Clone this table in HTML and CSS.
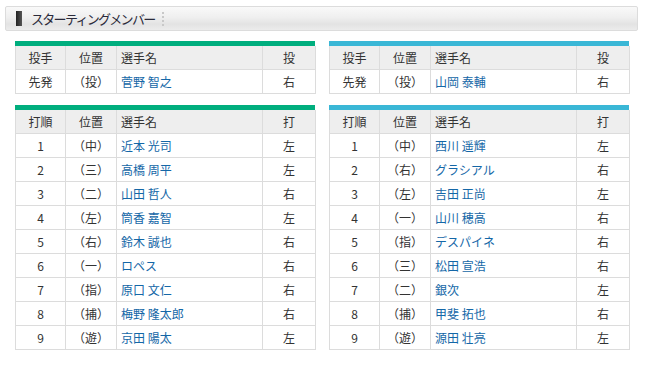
FILE: index.html
```html
<!DOCTYPE html>
<html lang="ja">
<head>
<meta charset="utf-8">
<link rel="stylesheet" href="styles.css">
</head>
<body>
<div class="page">
  <div class="heading">
    <span class="mark"></span>
    <h2 class="title">スターティングメンバー</h2>
    <span class="sep"></span>
  </div>
  <div class="teams">
    <div class="team home">
      <div class="block">
      <table class="lineup">
        <colgroup><col class="c1"><col class="c2"><col class="c3"><col class="c4"></colgroup>
        <thead><tr><th>投手</th><th>位置</th><th class="name">選手名</th><th>投</th></tr></thead>
        <tbody>
          <tr><td>先発</td><td>（投）</td><td class="name"><a>菅野 智之</a></td><td>右</td></tr>
        </tbody>
      </table>
      </div>
      <div class="block">
      <table class="lineup">
        <colgroup><col class="c1"><col class="c2"><col class="c3"><col class="c4"></colgroup>
        <thead><tr><th>打順</th><th>位置</th><th class="name">選手名</th><th>打</th></tr></thead>
        <tbody>
          <tr><td>1</td><td>（中）</td><td class="name"><a>近本 光司</a></td><td>左</td></tr>
          <tr><td>2</td><td>（三）</td><td class="name"><a>高橋 周平</a></td><td>左</td></tr>
          <tr><td>3</td><td>（二）</td><td class="name"><a>山田 哲人</a></td><td>右</td></tr>
          <tr><td>4</td><td>（左）</td><td class="name"><a>筒香 嘉智</a></td><td>左</td></tr>
          <tr><td>5</td><td>（右）</td><td class="name"><a>鈴木 誠也</a></td><td>右</td></tr>
          <tr><td>6</td><td>（一）</td><td class="name"><a>ロペス</a></td><td>右</td></tr>
          <tr><td>7</td><td>（指）</td><td class="name"><a>原口 文仁</a></td><td>右</td></tr>
          <tr><td>8</td><td>（捕）</td><td class="name"><a>梅野 隆太郎</a></td><td>右</td></tr>
          <tr><td>9</td><td>（遊）</td><td class="name"><a>京田 陽太</a></td><td>左</td></tr>
        </tbody>
      </table>
      </div>
    </div>
    <div class="team away">
      <div class="block">
      <table class="lineup">
        <colgroup><col class="c1"><col class="c2"><col class="c3"><col class="c4"></colgroup>
        <thead><tr><th>投手</th><th>位置</th><th class="name">選手名</th><th>投</th></tr></thead>
        <tbody>
          <tr><td>先発</td><td>（投）</td><td class="name"><a>山岡 泰輔</a></td><td>右</td></tr>
        </tbody>
      </table>
      </div>
      <div class="block">
      <table class="lineup">
        <colgroup><col class="c1"><col class="c2"><col class="c3"><col class="c4"></colgroup>
        <thead><tr><th>打順</th><th>位置</th><th class="name">選手名</th><th>打</th></tr></thead>
        <tbody>
          <tr><td>1</td><td>（中）</td><td class="name"><a>西川 遥輝</a></td><td>左</td></tr>
          <tr><td>2</td><td>（右）</td><td class="name"><a>グラシアル</a></td><td>右</td></tr>
          <tr><td>3</td><td>（左）</td><td class="name"><a>吉田 正尚</a></td><td>左</td></tr>
          <tr><td>4</td><td>（一）</td><td class="name"><a>山川 穂高</a></td><td>右</td></tr>
          <tr><td>5</td><td>（指）</td><td class="name"><a>デスパイネ</a></td><td>右</td></tr>
          <tr><td>6</td><td>（三）</td><td class="name"><a>松田 宣浩</a></td><td>右</td></tr>
          <tr><td>7</td><td>（二）</td><td class="name"><a>銀次</a></td><td>左</td></tr>
          <tr><td>8</td><td>（捕）</td><td class="name"><a>甲斐 拓也</a></td><td>右</td></tr>
          <tr><td>9</td><td>（遊）</td><td class="name"><a>源田 壮亮</a></td><td>左</td></tr>
        </tbody>
      </table>
      </div>
    </div>
  </div>
</div>
</body>
</html>
```
FILE: styles.css
```css
* { box-sizing: border-box; }
body {
  margin: 0;
  background: #fff;
  font-family: "Noto Sans CJK JP", "Noto Sans", sans-serif;
  color: #333;
}
.page {
  padding: 6px 10px 0 5px;
}
.heading {
  height: 25px;
  border: 1px solid #dcdcdc;
  border-radius: 2px;
  background: linear-gradient(#f9f9f9 0%, #efefef 45%, #e3e3e3 75%, #ececec 100%);
  display: flex;
  align-items: center;
  padding-left: 10px;
}
.mark {
  width: 6px;
  height: 15px;
  background: linear-gradient(90deg, #222, #555);
}
.title {
  margin: 0 0 0 9px;
  font-size: 13px;
  font-weight: normal;
  letter-spacing: -1.7px;
  color: #2a2a3a;
  line-height: 1;
}
.sep {
  margin-left: 7px;
  height: 14px;
  border-left: 2px dotted #c8c8c8;
}
.teams {
  display: flex;
  gap: 14px;
  padding: 10px 0 0 10px;
}
.team {
  width: 300px;
  display: flex;
  flex-direction: column;
  gap: 11px;
}
.block {
  border-top: 5px solid #00ae7e;
}
.away .block { border-top-color: #3ab7d6; }
.lineup {
  width: 300px;
  border-collapse: separate;
  border-spacing: 0;
  table-layout: fixed;
  font-size: 12px;
  border-left: 1px solid #dcdcdc;
}
.c1 { width: 50px; }
.c2 { width: 51px; }
.c3 { width: 146px; }
.c4 { width: 53px; }
.lineup th, .lineup td {
  height: 24px;
  padding: 0;
  border-right: 1px solid #dcdcdc;
  border-bottom: 1px solid #dcdcdc;
  text-align: center;
  font-weight: normal;
  line-height: 23px;
  color: #333;
}
.lineup th { background: #eeeeee; }
.lineup .name { text-align: left; padding-left: 4px; }
.lineup a { color: #1467a7; text-decoration: none; }
```
